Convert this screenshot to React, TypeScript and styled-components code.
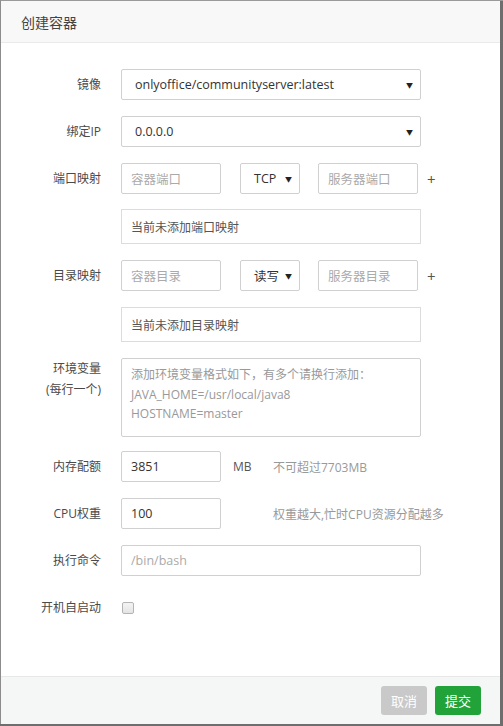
import styled, { createGlobalStyle } from 'styled-components';

const GlobalStyle = createGlobalStyle`
    html, body {
        margin: 0;
        padding: 0;
        background: #6e6e6e;
    }

    body {
        font-family: 'Open Sans', 'Noto Sans CJK SC', sans-serif;
        font-size: 12px;
        color: #333;
        border-top: 1px solid #9a9a9a;
        border-left: 1px solid #8c8c8c;
    }
`;

const Dialog = styled.div`
    width: 499px;
    height: 723px;
    background: #fff;
    display: flex;
    flex-direction: column;
`;

const Header = styled.div`
    height: 41px;
    display: flex;
    align-items: center;
    padding: 0 20px;
    background: #f8f8f8;
    border-bottom: 1px solid #eaeaea;
    font-size: 14px;
    color: #444;
`;

const Body = styled.div`
    flex: 1;
    padding-top: 26px;
    display: flex;
    flex-direction: column;
    gap: 16px;
`;

const Row = styled.div<{ $top?: boolean; $shift?: number; $after?: number }>`
    display: grid;
    grid-template-columns: 100px auto;
    column-gap: 20px;
    min-height: 31px;
    align-items: ${(p) => (p.$top ? 'start' : 'center')};
    margin-top: ${(p) => p.$shift ?? 0}px;
    margin-bottom: ${(p) => p.$after ?? 0}px;
`;

const Label = styled.div<{ $padTop?: number }>`
    text-align: right;
    color: #4a4a4a;
    line-height: 21px;
    padding-top: ${(p) => p.$padTop ?? 0}px;
`;

const Field = styled.div`
    display: flex;
    align-items: center;
`;

const Input = styled.div<{ $w?: number; $gap?: number; $placeholder?: boolean }>`
    box-sizing: border-box;
    width: ${(p) => p.$w ?? 300}px;
    height: 31px;
    margin-left: ${(p) => p.$gap ?? 0}px;
    border: 1px solid #d0d0d0;
    border-radius: 2px;
    padding: 0 9px;
    display: flex;
    align-items: center;
    font-size: 12.5px;
    color: ${(p) => (p.$placeholder ? '#aaa' : '#333')};
`;

const Select = styled(Input)`
    padding: 0 7px 0 13px;
    justify-content: space-between;
    color: #333;
`;

const Arrow = styled.span`
    font-size: 7px;
    color: #222;
`;

const Notice = styled.div`
    box-sizing: border-box;
    width: 300px;
    height: 35px;
    border: 1px solid #dcdcdc;
    padding: 0 9px;
    display: flex;
    align-items: center;
    color: #555;
`;

const TextArea = styled.div`
    box-sizing: border-box;
    width: 300px;
    height: 79px;
    border: 1px solid #d0d0d0;
    border-radius: 2px;
    padding: 6px 9px;
    color: #999;
    line-height: 19.5px;
`;

const Plus = styled.span`
    margin-left: 9px;
    font-size: 15px;
    color: #555;
`;

const Unit = styled.span`
    margin-left: 12px;
    width: 40px;
    color: #555;
`;

const Hint = styled.span<{ $offset?: number }>`
    margin-left: ${(p) => p.$offset ?? 0}px;
    color: #999;
`;

const Checkbox = styled.span`
    box-sizing: border-box;
    width: 12px;
    height: 12px;
    margin-left: 1px;
    border: 1px solid #b4b4b4;
    border-radius: 2px;
    background: linear-gradient(#f4f4f4, #e4e4e4);
`;

const Footer = styled.div`
    height: 47px;
    border-top: 1px solid #e8e8e8;
    background: #f5f6f6;
    display: flex;
    align-items: center;
    justify-content: flex-end;
    gap: 8px;
    padding: 0 19px;
`;

const Button = styled.button<{ $primary?: boolean }>`
    width: 46px;
    height: 29px;
    border: none;
    border-radius: 3px;
    font-family: inherit;
    font-size: 13px;
    color: #fff;
    background: ${(p) => (p.$primary ? '#22a33a' : '#c9c9c9')};
`;

const App = (): JSX.Element => (
    <Dialog>
        <GlobalStyle />
        <Header>创建容器</Header>
        <Body>
            <Row>
                <Label>镜像</Label>
                <Select>
                    onlyoffice/communityserver:latest
                    <Arrow>▼</Arrow>
                </Select>
            </Row>
            <Row>
                <Label>绑定IP</Label>
                <Select>
                    0.0.0.0
                    <Arrow>▼</Arrow>
                </Select>
            </Row>
            <Row>
                <Label>端口映射</Label>
                <Field>
                    <Input $w={100} $placeholder>容器端口</Input>
                    <Select $w={60} $gap={19}>
                        TCP
                        <Arrow>▼</Arrow>
                    </Select>
                    <Input $w={100} $gap={18} $placeholder>
                        服务器端口
                    </Input>
                    <Plus>+</Plus>
                </Field>
            </Row>
            <Row $shift={-1}>
                <span />
                <Notice>当前未添加端口映射</Notice>
            </Row>
            <Row>
                <Label>目录映射</Label>
                <Field>
                    <Input $w={100} $placeholder>容器目录</Input>
                    <Select $w={60} $gap={19}>
                        读写
                        <Arrow>▼</Arrow>
                    </Select>
                    <Input $w={100} $gap={18} $placeholder>
                        服务器目录
                    </Input>
                    <Plus>+</Plus>
                </Field>
            </Row>
            <Row>
                <span />
                <Notice>当前未添加目录映射</Notice>
            </Row>
            <Row $top $after={-2}>
                <Label $padTop={0}>
                    环境变量
                    <br />
                    (每行一个)
                </Label>
                <TextArea>
                    添加环境变量格式如下，有多个请换行添加：
                    <br />
                    JAVA_HOME=/usr/local/java8
                    <br />
                    HOSTNAME=master
                </TextArea>
            </Row>
            <Row>
                <Label>内存配额</Label>
                <Field>
                    <Input $w={100}>3851</Input>
                    <Unit>MB</Unit>
                    <Hint>不可超过7703MB</Hint>
                </Field>
            </Row>
            <Row>
                <Label>CPU权重</Label>
                <Field>
                    <Input $w={100}>100</Input>
                    <Hint $offset={52}>权重越大,忙时CPU资源分配越多</Hint>
                </Field>
            </Row>
            <Row>
                <Label>执行命令</Label>
                <Input $placeholder>/bin/bash</Input>
            </Row>
            <Row>
                <Label>开机自启动</Label>
                <Field>
                    <Checkbox />
                </Field>
            </Row>
        </Body>
        <Footer>
            <Button>取消</Button>
            <Button $primary>提交</Button>
        </Footer>
    </Dialog>
);

export default App;
